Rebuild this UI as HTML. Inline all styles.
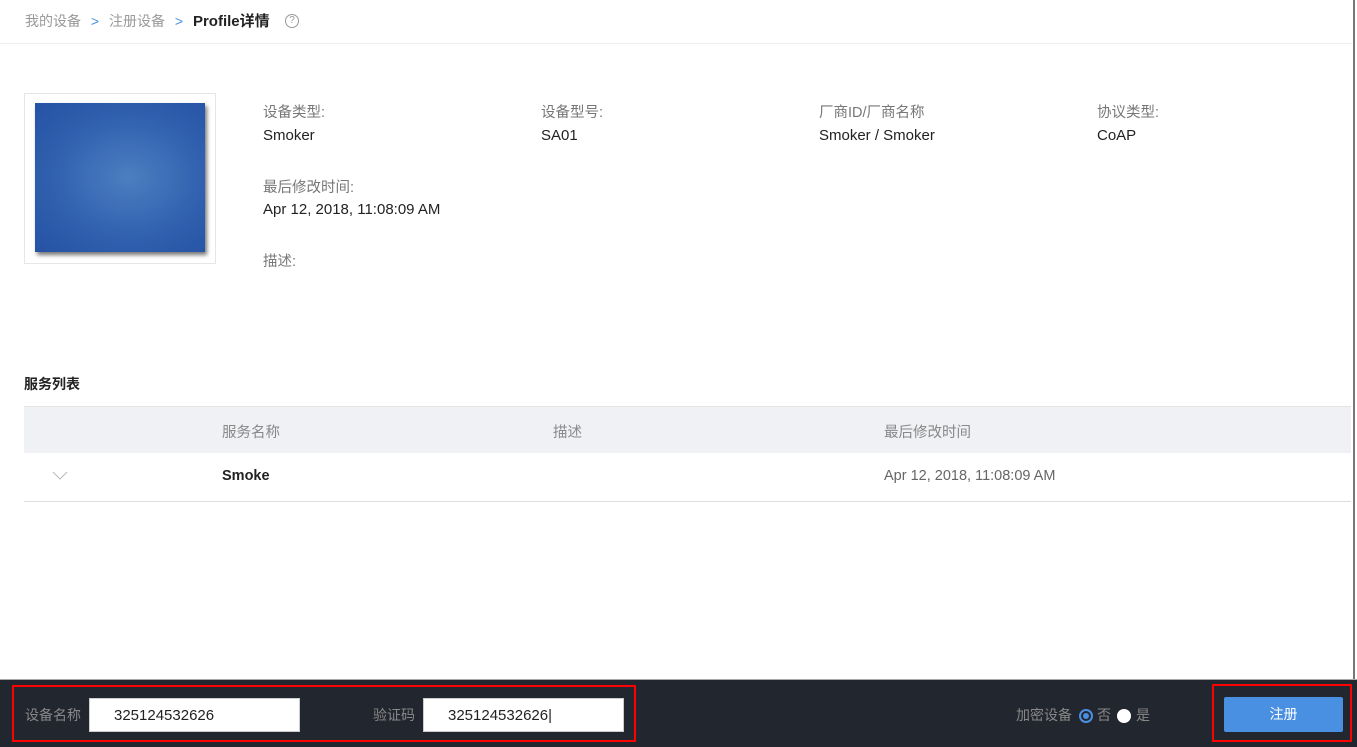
<!DOCTYPE html>
<html><head><meta charset="utf-8"><style>
*{margin:0;padding:0;box-sizing:border-box}
body{width:1357px;height:747px;position:relative;overflow:hidden;background:#fff;font-family:"Liberation Sans","Noto Sans CJK SC",sans-serif;font-size:14px;color:#333}
.a{position:absolute;white-space:nowrap}
.lbl{color:#777;font-size:14.5px}
.val{color:#222;font-size:15px}
</style></head><body>
<div class="a" style="left:25px;top:10px;font-size:14px;color:#999">我的设备 <span style="color:#4a90e2;margin:0 6px">&gt;</span> 注册设备 <span style="color:#4a90e2;margin:0 6px">&gt;</span> <b style="color:#222;font-size:15px">Profile详情</b></div>
<div class="a" style="left:285px;top:14px;width:14px;height:14px;border:1px solid #999;border-radius:50%;font-size:10px;line-height:12px;text-align:center;color:#999">?</div>
<div class="a" style="left:0;top:43px;width:1352px;height:1px;background:#eee"></div>
<div class="a" style="left:1353px;top:0;width:2px;height:680px;background:#777"></div>

<div class="a" style="left:24px;top:93px;width:192px;height:171px;border:1px solid #e6e6e6"></div>
<div class="a" style="left:35px;top:103px;width:170px;height:149px;background:radial-gradient(ellipse at 55% 50%,#4c7ec0,#2f5fae 60%,#2652a3);box-shadow:2px 3px 4px #777"></div>

<div class="a lbl" style="left:263px;top:101px">设备类型:</div>
<div class="a val" style="left:263px;top:127px">Smoker</div>
<div class="a lbl" style="left:541px;top:101px">设备型号:</div>
<div class="a val" style="left:541px;top:127px">SA01</div>
<div class="a lbl" style="left:819px;top:101px">厂商ID/厂商名称</div>
<div class="a val" style="left:819px;top:127px">Smoker / Smoker</div>
<div class="a lbl" style="left:1097px;top:101px">协议类型:</div>
<div class="a val" style="left:1097px;top:127px">CoAP</div>
<div class="a lbl" style="left:263px;top:176px">最后修改时间:</div>
<div class="a val" style="left:263px;top:201px">Apr 12, 2018, 11:08:09 AM</div>
<div class="a lbl" style="left:263px;top:250px">描述:</div>

<div class="a" style="left:24px;top:374px;font-size:14px;font-weight:bold;color:#222">服务列表</div>
<div class="a" style="left:24px;top:406px;width:1327px;height:47px;background:#f0f1f5;border-top:1px solid #e4e4e4"></div>
<div class="a lbl" style="left:222px;top:421px;color:#888">服务名称</div>
<div class="a lbl" style="left:553px;top:421px;color:#888">描述</div>
<div class="a lbl" style="left:884px;top:421px;color:#888">最后修改时间</div>
<svg class="a" style="left:52px;top:471px" width="16" height="10"><path d="M1 1L8 8L15 1" fill="none" stroke="#bbb" stroke-width="1"/></svg>
<div class="a" style="left:222px;top:468px;font-weight:bold;color:#222;font-size:14.5px">Smoke</div>
<div class="a" style="left:884px;top:468px;color:#666;font-size:14.5px">Apr 12, 2018, 11:08:09 AM</div>
<div class="a" style="left:24px;top:501px;width:1327px;height:1px;background:#ddd"></div>

<div class="a" style="left:0;top:679px;width:1357px;height:68px;background:#22262e;border-top:1px solid #aaa"></div>
<div class="a" style="left:12px;top:685px;width:624px;height:57px;border:2px solid #f00"></div>
<div class="a" style="left:25px;top:705px;color:#888">设备名称</div>
<div class="a" style="left:89px;top:698px;width:211px;height:34px;background:#fff;border:1px solid #ccc;padding-left:24px;line-height:34px;font-size:15px;color:#222">325124532626</div>
<div class="a" style="left:373px;top:705px;color:#888">验证码</div>
<div class="a" style="left:423px;top:698px;width:201px;height:34px;background:#fff;border:1px solid #ccc;padding-left:24px;line-height:34px;font-size:15px;color:#222">325124532626|</div>
<div class="a" style="left:1016px;top:705px;color:#888">加密设备</div>
<div class="a" style="left:1079px;top:709px;width:14px;height:14px;border-radius:50%;border:2px solid #4a90e2;background:#22262e"><div style="margin:2px;width:6px;height:6px;border-radius:50%;background:#4a90e2"></div></div>
<div class="a" style="left:1097px;top:705px;color:#888">否</div>
<div class="a" style="left:1117px;top:709px;width:14px;height:14px;border-radius:50%;background:#fff"></div>
<div class="a" style="left:1136px;top:705px;color:#888">是</div>
<div class="a" style="left:1212px;top:684px;width:140px;height:58px;border:2px solid #f00"></div>
<div class="a" style="left:1224px;top:697px;width:119px;height:35px;background:#4a90e2;border-radius:2px;color:#fff;text-align:center;line-height:35px">注册</div>
</body></html>
